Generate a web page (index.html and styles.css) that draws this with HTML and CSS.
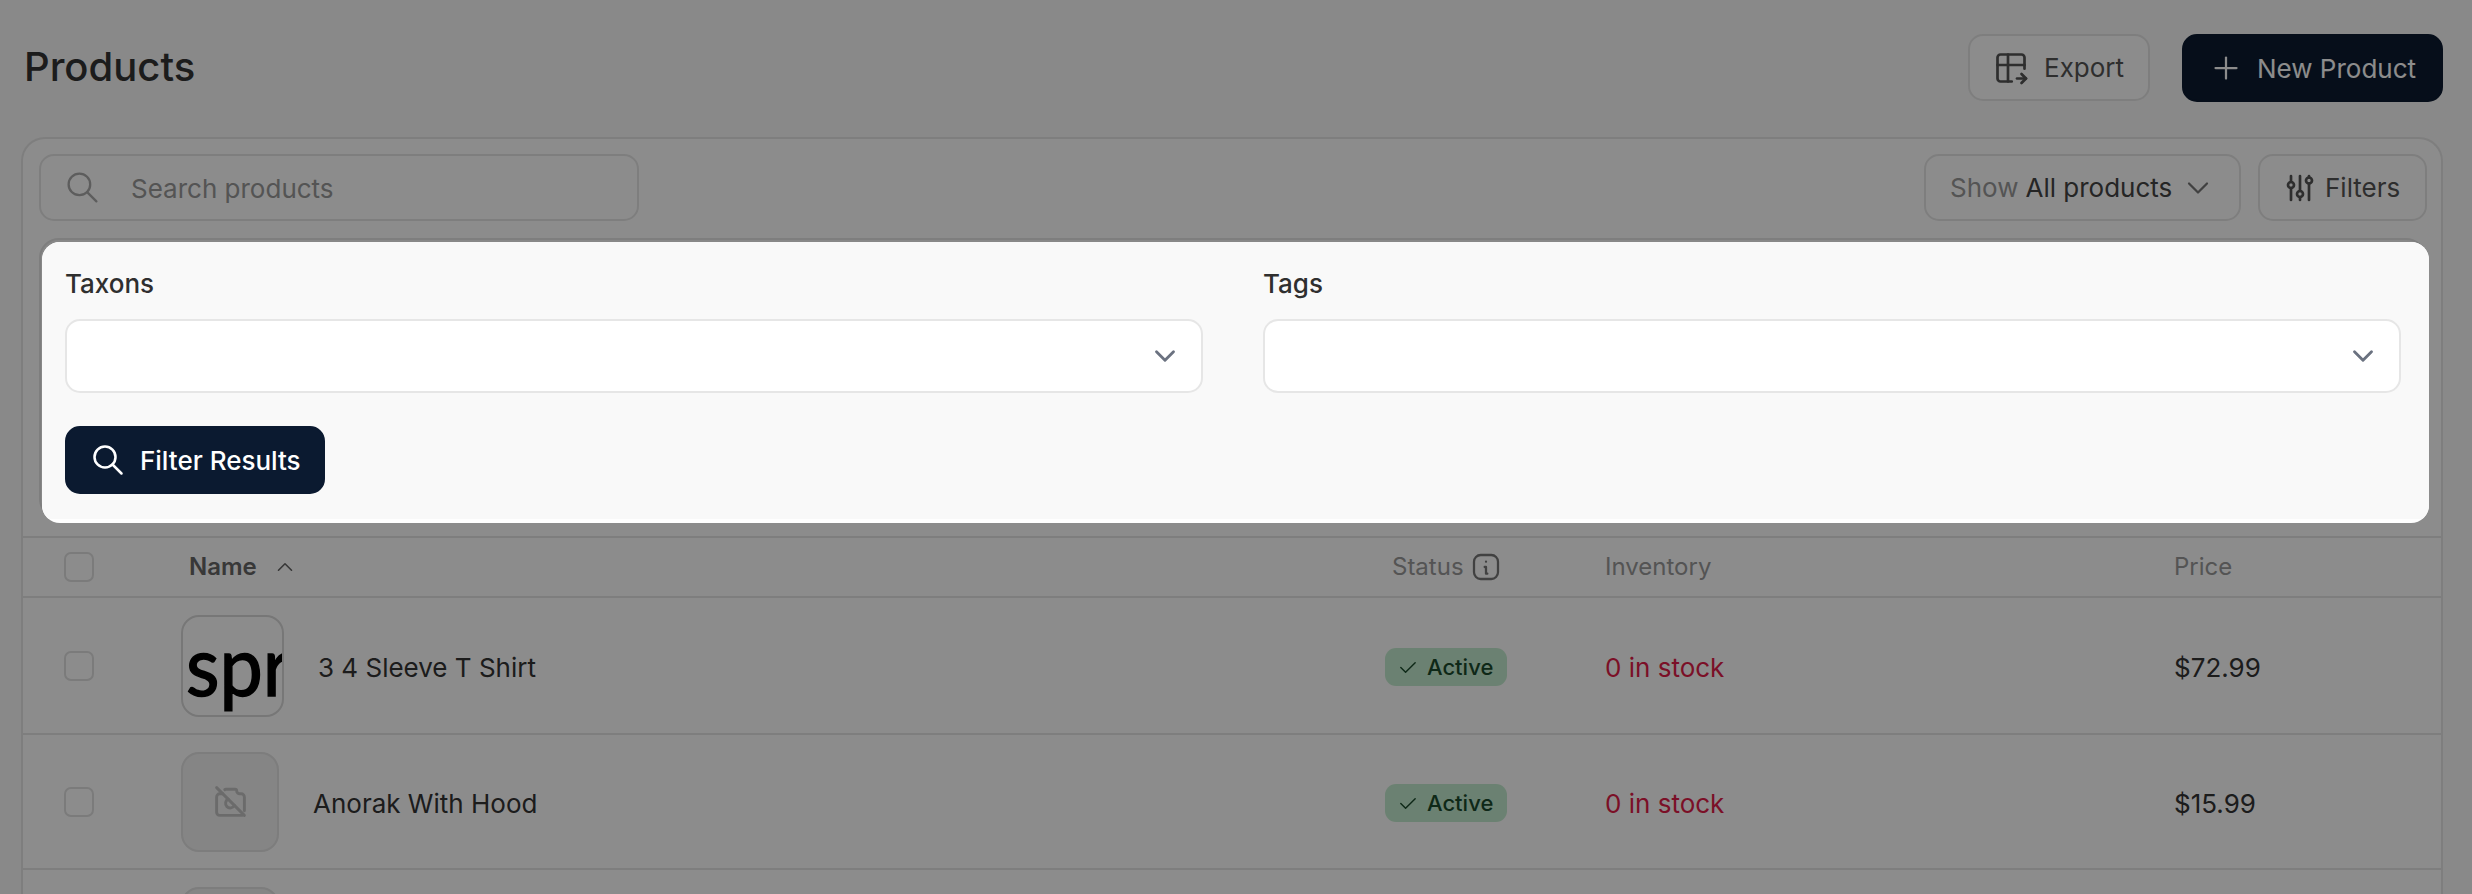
FILE: index.html
```html
<!DOCTYPE html>
<html lang="en">
<head>
<meta charset="utf-8">
<title>Products</title>
<link rel="stylesheet" href="styles.css">
</head>
<body>
<svg width="0" height="0" class="defs">
  <symbol id="i-search" viewBox="0 0 24 24"><circle cx="10" cy="10" r="7"/><path d="M21 21l-6-6"/></symbol>
  <symbol id="i-export" viewBox="0 0 24 24"><path d="M12.5 21h-7.5a2 2 0 0 1 -2 -2v-14a2 2 0 0 1 2 -2h14a2 2 0 0 1 2 2v7.5"/><path d="M3 10h18"/><path d="M10 3v18"/><path d="M16 19h6"/><path d="M19 16l3 3l-3 3"/></symbol>
  <symbol id="i-plus" viewBox="0 0 24 24"><path d="M12 5v14"/><path d="M5 12h14"/></symbol>
  <symbol id="i-down" viewBox="0 0 24 24"><path d="M6 9l6 6l6 -6"/></symbol>
  <symbol id="i-up" viewBox="0 0 24 24"><path d="M6 15l6 -6l6 6"/></symbol>
  <symbol id="i-filters" viewBox="0 0 24 24"><path d="M4 10a2 2 0 1 0 4 0a2 2 0 0 0 -4 0"/><path d="M6 4v4"/><path d="M6 12v8"/><path d="M10 16a2 2 0 1 0 4 0a2 2 0 0 0 -4 0"/><path d="M12 4v10"/><path d="M12 18v2"/><path d="M16 7a2 2 0 1 0 4 0a2 2 0 0 0 -4 0"/><path d="M18 4v1"/><path d="M18 9v11"/></symbol>
  <symbol id="i-info" viewBox="0 0 24 24"><rect x="3" y="3" width="18" height="18" rx="5"/><path d="M12 8h.01"/><path d="M11 12h1v5h1"/></symbol>
  <symbol id="i-check" viewBox="0 0 24 24"><path d="M5 12l5 5l10 -10"/></symbol>
  <symbol id="i-nocam" viewBox="0 0 24 24"><path d="M3 3l18 18"/><path d="M8.3 4.3a1 1 0 0 1 .7 -.3h6a1 1 0 0 1 1 1a2 2 0 0 0 2 2h1a2 2 0 0 1 2 2v9"/><path d="M19.8 20.8a2 2 0 0 1 -.8 .2h-14a2 2 0 0 1 -2 -2v-10a2 2 0 0 1 2 -2h2"/><path d="M10.5 10.5a3 3 0 1 0 4 4"/></symbol>
</svg>

<main class="page">
  <header class="page-head">
    <h1 class="title">Products</h1>
    <div class="head-actions">
      <button class="btn btn-export"><svg class="icon icon-36"><use href="#i-export"/></svg>Export</button>
      <button class="btn btn-new"><svg class="icon icon-36"><use href="#i-plus"/></svg>New Product</button>
    </div>
  </header>

  <section class="card">
    <div class="toolbar">
      <div class="search"><svg class="icon icon-search"><use href="#i-search"/></svg><span class="search-text">Search products</span></div>
      <div class="tools">
        <button class="btn btn-show"><span class="muted">Show</span> All products<svg class="icon icon-down"><use href="#i-down"/></svg></button>
        <button class="btn btn-filters"><svg class="icon icon-36"><use href="#i-filters"/></svg>Filters</button>
      </div>
    </div>

    <div class="filter-slot"></div>

    <div class="table">
      <div class="tr tr-head">
        <div><span class="check"></span></div>
        <div class="th-name"><span class="th-label">Name</span><svg class="icon icon-up"><use href="#i-up"/></svg></div>
        <div class="th th-status"><span class="th-label">Status</span><svg class="icon icon-info"><use href="#i-info"/></svg></div>
        <div class="th"><span class="th-label">Inventory</span></div>
        <div class="th"><span class="th-label">Price</span></div>
      </div>
      <div class="tr">
        <div><span class="check"></span></div>
        <div class="product"><div class="thumb thumb-logo"><span class="logo">spr</span></div><span class="nudge">3 4 Sleeve T Shirt</span></div>
        <div class="nudge"><span class="badge"><svg class="icon icon-check"><use href="#i-check"/></svg>Active</span></div>
        <div class="nudge stock">0 in stock</div>
        <div class="nudge">$72.99</div>
      </div>
      <div class="tr">
        <div><span class="check"></span></div>
        <div class="product"><div class="thumb thumb-empty"><svg class="icon icon-nocam"><use href="#i-nocam"/></svg></div><span class="nudge">Anorak With Hood</span></div>
        <div class="nudge"><span class="badge"><svg class="icon icon-check"><use href="#i-check"/></svg>Active</span></div>
        <div class="nudge stock">0 in stock</div>
        <div class="nudge">$15.99</div>
      </div>
      <div class="tr">
        <div></div>
        <div class="product"><div class="thumb thumb-empty"></div></div>
      </div>
    </div>
  </section>
</main>

<div class="overlay"></div>

<div class="modal">
  <div class="modal-body">
    <div class="fields">
      <div class="field">
        <label class="label">Taxons</label>
        <div class="select"><svg class="icon icon-chev"><use href="#i-down"/></svg></div>
      </div>
      <div class="field">
        <label class="label">Tags</label>
        <div class="select"><svg class="icon icon-chev"><use href="#i-down"/></svg></div>
      </div>
    </div>
    <button class="btn btn-apply"><svg class="icon icon-36 icon-apply"><use href="#i-search"/></svg>Filter Results</button>
  </div>
</div>
</body>
</html>
```
FILE: styles.css
```css
* { box-sizing: border-box; }
html, body { margin: 0; height: 894px; overflow: hidden; }
body { position: relative; background: #f9f9f9; font-family: Inter, "Liberation Sans", sans-serif; font-size: 26px; color: #333; }
.defs { position: absolute; }
.icon { display: block; flex: none; fill: none; stroke: currentColor; stroke-width: 1.5; stroke-linecap: round; stroke-linejoin: round; }
.icon-36 { width: 36px; height: 36px; }

.page { height: 894px; padding: 34px 29px 0 21px; }
.page-head { display: flex; justify-content: space-between; align-items: center; height: 68px; }
.title { margin: 0 0 0 3px; padding-bottom: 3px; font-size: 40px; font-weight: 500; color: #333; }
.head-actions { display: flex; gap: 32px; }

.btn { display: inline-flex; align-items: center; height: 67px; padding: 0; border: 2px solid #e6e6e6; border-radius: 15px; background: #fff; color: #555; font: inherit; }
.btn-export { width: 182px; padding-left: 23px; gap: 15px; }
.btn-export .icon, .btn-filters .icon { stroke-width: 1.8; }
.btn-new { width: 261px; height: 68px; padding-left: 24px; gap: 13px; background: #0b1a30; border-color: #0b1a30; color: #fff; }

.card { margin-top: 35px; height: 757px; border: 2px solid #e6e6e6; border-bottom: 0; border-radius: 24px 24px 0 0; background: #fff; overflow: hidden; }
.toolbar { display: flex; justify-content: space-between; padding: 15px 14px 0 16px; }
.search { display: flex; align-items: center; width: 600px; height: 67px; padding-left: 23px; gap: 30px; border: 2px solid #e6e6e6; border-radius: 15px; color: #999; }
.search-text { padding-top: 2px; }
.icon-search { width: 37px; height: 37px; color: #aaa; }
.tools { display: flex; gap: 17px; }
.btn-show { width: 317px; padding-left: 24px; color: #444; }
.muted { margin-right: 7px; color: #999; }
.icon-down { width: 36px; height: 36px; margin-left: 8px; color: #777; }
.btn-filters { width: 169px; padding-left: 22px; gap: 7px; }

.filter-slot { height: 281px; margin: 17px 15px 17px 16px; border: 2px solid #e6e6e6; border-radius: 20px; background: #f7f7f7; }

.tr { display: grid; grid-template-columns: 117px 1204px 220px 569px 1fr; align-items: center; padding: 16.5px 0 16.5px 41px; border-bottom: 2px solid #e6e6e6; color: #333; }
.tr-head { height: 62px; padding: 0 0 0 41px; border-top: 2px solid #e6e6e6; font-size: 24px; }
.check { display: block; width: 30px; height: 30px; border: 2px solid #e0e0e0; border-radius: 7px; }
.th-name { display: flex; align-items: center; margin-left: 8px; gap: 15px; font-weight: 600; color: #666; }
.th-label { display: block; padding-bottom: 2px; }
.icon-up { width: 26px; height: 26px; }
.th { color: #999; }
.th-status { display: flex; align-items: center; gap: 6px; padding-left: 7px; }
.icon-info { width: 32px; height: 32px; color: #777; stroke-width: 1.7; }
.nudge { padding-top: 3px; }

.product { display: flex; align-items: center; gap: 34px; }
.thumb { display: flex; flex: none; border-radius: 18px; overflow: hidden; }
.thumb-logo { position: relative; width: 103px; height: 102px; border: 2px solid #d9d9d9; }
.thumb-empty { width: 98px; height: 100px; align-items: center; justify-content: center; border: 2px solid #e3e3e3; background: #f2f2f2; }
.logo { position: absolute; left: 3px; top: 5px; font-family: Lato, sans-serif; font-size: 84px; font-weight: 400; line-height: 84px; color: #000; -webkit-text-stroke: 1.5px #000; transform: scaleX(.92); transform-origin: left center; }
.icon-nocam { width: 37px; height: 37px; color: #c4c4c4; stroke-width: 1.9; }

.badge { display: inline-flex; align-items: center; width: 122px; height: 38px; padding-left: 11px; gap: 8px; border-radius: 11px; background: #c4eccf; color: #1a4a2c; font-size: 22px; font-weight: 500; }
.icon-check { width: 23px; height: 23px; }
.stock { color: #e11d48; }

.overlay { position: absolute; inset: 0; background: rgba(0, 0, 0, .45); }

.modal { position: absolute; left: 42px; top: 242px; width: 2387px; height: 281px; padding-bottom: 4px; border-radius: 18px; background: #fff; overflow: hidden; }
.modal-body { height: 100%; padding: 27px 28px 0 23px; background: #f9f9f9; }
.fields { display: grid; grid-template-columns: 1138px 1138px; gap: 60px; }
.label { display: block; height: 28px; margin-bottom: 22px; line-height: 30px; font-weight: 500; color: #2f2f2f; }
.select { display: flex; align-items: center; justify-content: flex-end; height: 74px; padding-right: 19px; border: 2px solid #e6e6e6; border-radius: 15px; background: #fff; color: #6b7280; }
.icon-chev { width: 34px; height: 34px; stroke-width: 2; }
.btn-apply { width: 260px; height: 68px; margin-top: 33px; padding-left: 23px; gap: 14px; background: #0b1a30; border-color: #0b1a30; color: #fff; font-weight: 500; }
.icon-apply { stroke-width: 1.7; }
```
